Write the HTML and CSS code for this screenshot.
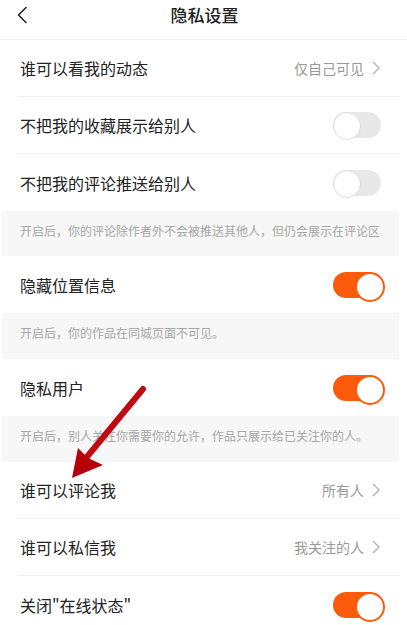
FILE: index.html
```html
<!DOCTYPE html>
<html lang="zh">
<head>
<meta charset="utf-8">
<link rel="stylesheet" href="styles.css">
</head>
<body>
<div class="page">
  <header class="header">
    <svg class="back" viewBox="0 0 12 18" width="12" height="18"><path d="M10 1.5 L2.5 9 L10 16.5" fill="none" stroke="#222" stroke-width="1.6" stroke-linecap="round" stroke-linejoin="round"/></svg>
    <div class="title">隐私设置</div>
  </header>

  <div class="row"><span class="label">谁可以看我的动态</span><span class="value">仅自己可见<svg class="chev" viewBox="0 0 8 14" width="8" height="14"><path d="M1 1 L7 7 L1 13" fill="none" stroke="#b0b0b0" stroke-width="1.3"/></svg></span></div>
  <div class="row"><span class="label">不把我的收藏展示给别人</span><span class="toggle"></span></div>
  <div class="row last"><span class="label">不把我的评论推送给别人</span><span class="toggle"></span></div>
  <div class="note">开启后，你的评论除作者外不会被推送其他人，但仍会展示在评论区</div>
  <div class="row last"><span class="label">隐藏位置信息</span><span class="toggle on"></span></div>
  <div class="note n2">开启后，你的作品在同城页面不可见。</div>
  <div class="row last"><span class="label">隐私用户</span><span class="toggle on"></span></div>
  <div class="note n2">开启后，别人关注你需要你的允许，作品只展示给已关注你的人。</div>
  <div class="row"><span class="label">谁可以评论我</span><span class="value">所有人<svg class="chev" viewBox="0 0 8 14" width="8" height="14"><path d="M1 1 L7 7 L1 13" fill="none" stroke="#b0b0b0" stroke-width="1.3"/></svg></span></div>
  <div class="row"><span class="label">谁可以私信我</span><span class="value">我关注的人<svg class="chev" viewBox="0 0 8 14" width="8" height="14"><path d="M1 1 L7 7 L1 13" fill="none" stroke="#b0b0b0" stroke-width="1.3"/></svg></span></div>
  <div class="row last"><span class="label">关闭"在线状态"</span><span class="toggle on"></span></div>

  <svg class="arrow" viewBox="0 0 407 625" width="407" height="625">
    <defs>
      <linearGradient id="g" x1="0" y1="0" x2="1" y2="0">
        <stop offset="0" stop-color="#a8000a"/>
        <stop offset="1" stop-color="#d0101a"/>
      </linearGradient>
    </defs>
    <line x1="143" y1="389" x2="86" y2="458" stroke="#c00a12" stroke-width="6" stroke-linecap="round"/>
    <polygon points="72,478 78,448 88,458 103,465" fill="#b3000b"/>
  </svg>
</div>
</body>
</html>
```

FILE: styles.css
```css
* { box-sizing: border-box; }
html, body { margin: 0; padding: 0; background: #fff; }
body {
  font-family: "Noto Sans CJK SC", "Noto Sans", sans-serif;
  color: #222;
  width: 407px;
  height: 625px;
  overflow: hidden;
}
.page {
  position: relative;
  width: 407px;
}
.header {
  height: 40px;
  border-bottom: 1px solid #f0f0f0;
  display: flex;
  align-items: center;
  justify-content: center;
  position: relative;
}
.back {
  position: absolute;
  left: 16px;
  top: 6px;
}
.title {
  font-size: 17px;
  font-weight: 500;
  color: #222;
  margin-top: -10px;
  margin-left: 2px;
}
.row {
  height: 57px;
  margin-left: 17px;
  margin-right: 7px;
  padding-left: 3px;
  padding-right: 20px;
  border-bottom: 1px solid #f0f0f0;
  display: flex;
  align-items: center;
  justify-content: space-between;
}
.row.last { border-bottom: none; }
.label {
  font-size: 16px;
  color: #222;
}
.value {
  font-size: 14px;
  color: #999;
  display: flex;
  align-items: center;
  gap: 8px;
}
.chev { display: block; }
.toggle {
  width: 48px;
  height: 26px;
  border-radius: 13px;
  background: #e8e8e8;
  position: relative;
  margin-right: -1px;
}
.toggle::after {
  content: "";
  position: absolute;
  left: 0;
  top: 0;
  width: 26px;
  height: 26px;
  border-radius: 50%;
  background: #fff;
  border: 1px solid #dcdcdc;
}
.toggle.on { background: #fd5a0b; }
.toggle.on::after {
  left: 22px;
  border: 2px solid #fd5a0b;
}
.note {
  height: 45px;
  margin-left: 2px;
  margin-right: 8px;
  background: #f7f7f7;
  font-size: 12px;
  color: #a6a6a6;
  padding-left: 18px;
  padding-top: 10px;
  line-height: 20px;
  white-space: nowrap;
}
.note.n2 { height: 46px; }
.arrow {
  position: absolute;
  left: 0;
  top: 0;
  pointer-events: none;
}
```
